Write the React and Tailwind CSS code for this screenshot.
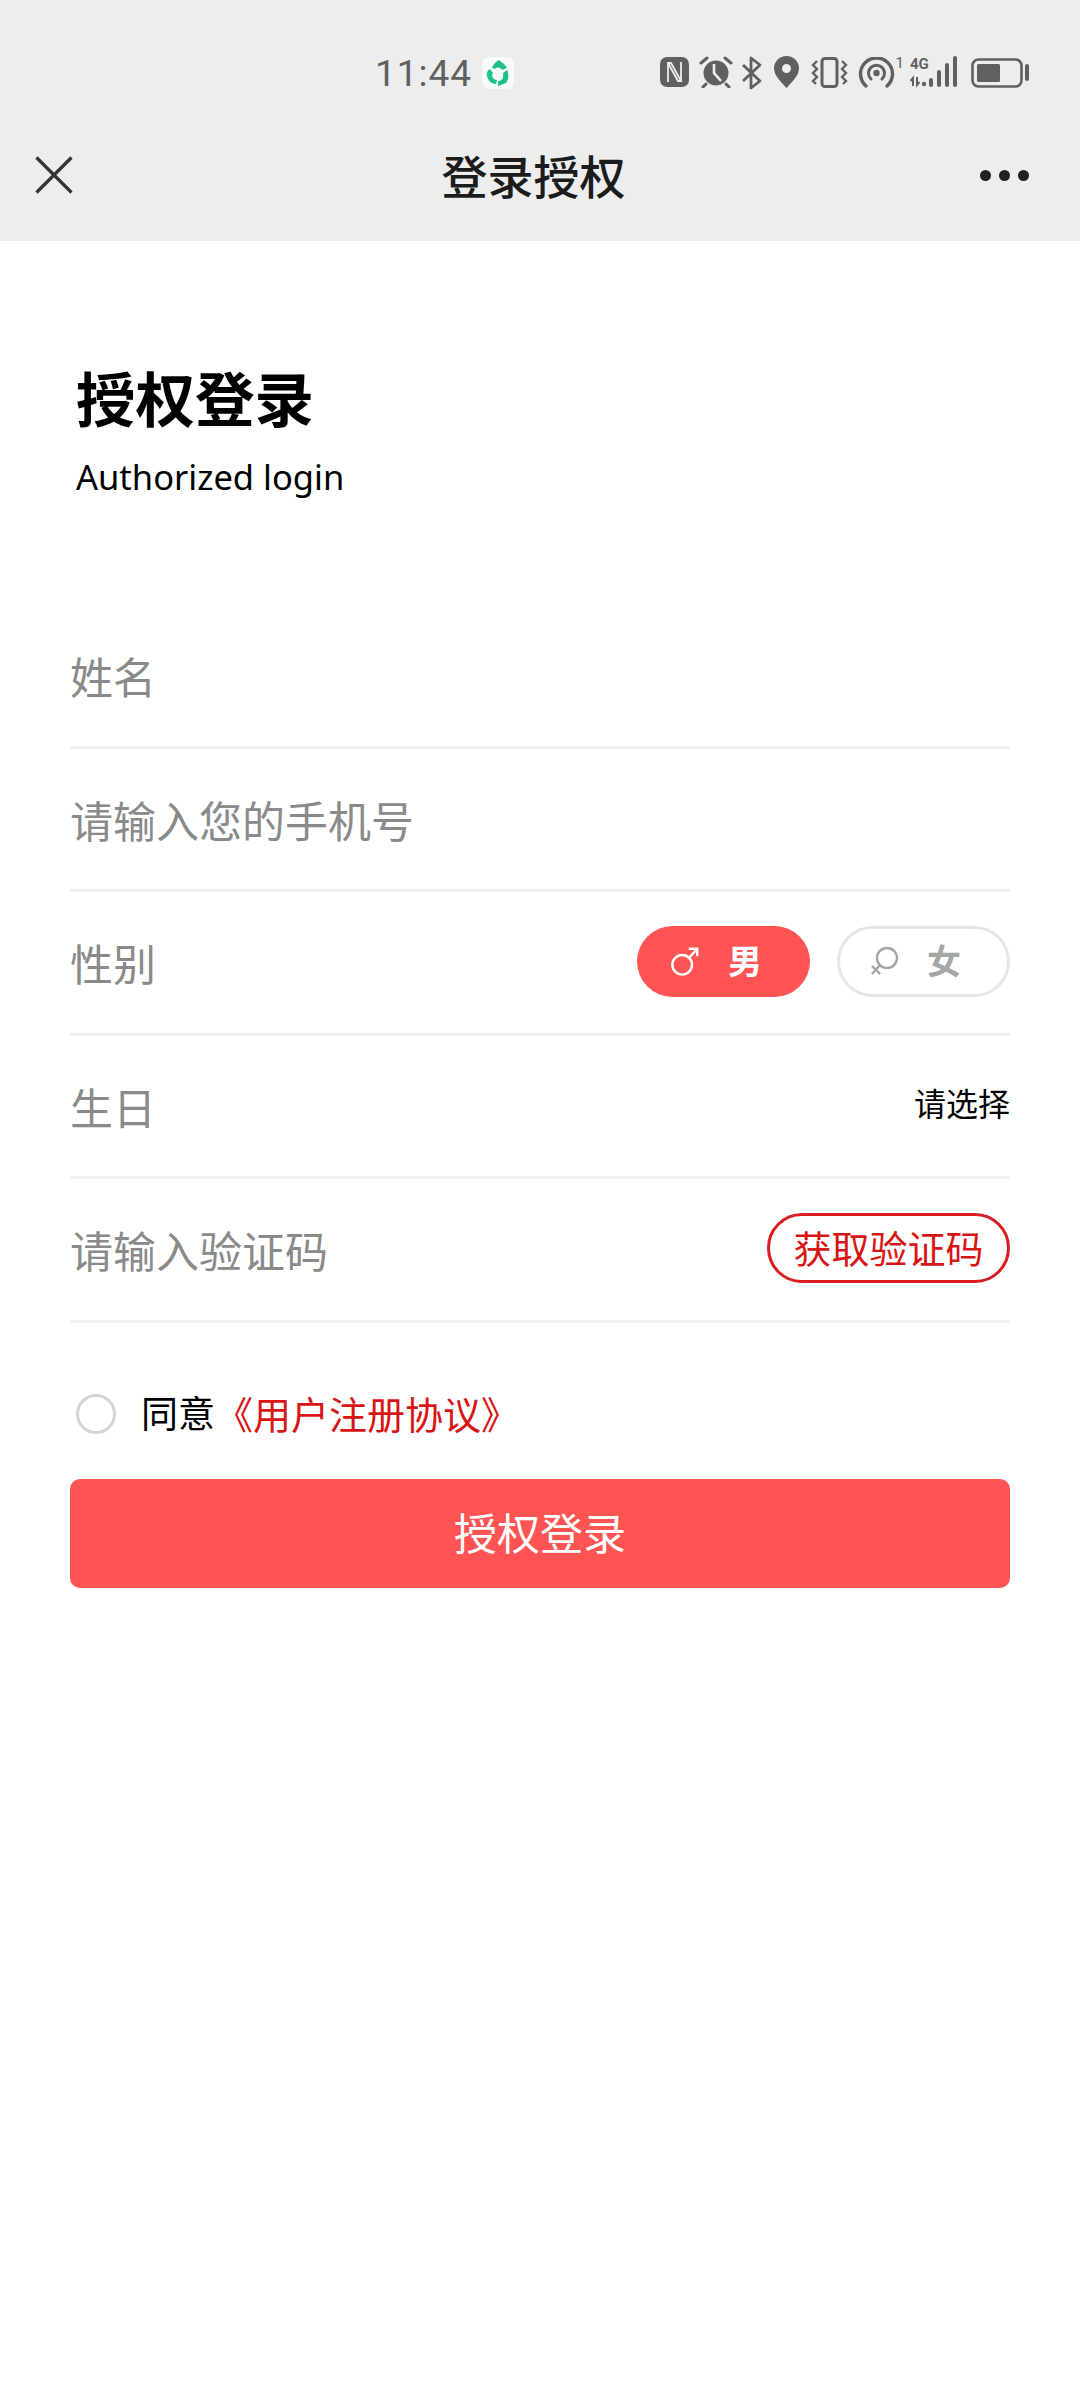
const CJK = "font-['Noto_Sans_CJK_SC','Noto_Sans',sans-serif]";

function StatusIcons() {
  return (
    <div className="flex items-start text-[#606060]">
      {/* NFC */}
      <svg width="29" height="30" viewBox="0 0 29 30" className="mt-[1px]">
        <rect width="29" height="30" rx="7" fill="#606060" />
        <path d="M8 25 V6 H11 L21 24 H18 L8 6 M21 5 V24" stroke="#ededed" strokeWidth="1.8" fill="none" />
      </svg>
      {/* Alarm */}
      <svg width="34" height="32" viewBox="0 0 34 32" className="ml-[10px]">
        <circle cx="17" cy="17" r="12.5" fill="#606060" />
        <path d="M15 8 V17 L22 25" stroke="#ededed" strokeWidth="2.6" fill="none" />
        <path d="M2 7 L8 2 M32 7 L26 2 M7 28 L4 31 M27 28 L30 31" stroke="#606060" strokeWidth="3" strokeLinecap="round" />
      </svg>
      {/* Bluetooth */}
      <svg width="21" height="34" viewBox="0 0 21 34" className="ml-[8px]">
        <path d="M2 9 L19 25 L10 32 V2 L19 9 L2 25" stroke="#606060" strokeWidth="2.8" fill="none" strokeLinejoin="round" />
      </svg>
      {/* Location */}
      <svg width="25" height="32" viewBox="0 0 25 32" className="ml-[12px]">
        <path fillRule="evenodd" d="M12.5 0 C5.5 0 0 5.5 0 12.3 C0 20 8 27 12.5 32 C17 27 25 20 25 12.3 C25 5.5 19.5 0 12.5 0 Z M12.5 8 A4.5 4.5 0 1 1 12.5 17 A4.5 4.5 0 1 1 12.5 8 Z" fill="#606060" />
      </svg>
      {/* Vibrate */}
      <svg width="37" height="31" viewBox="0 0 37 31" className="ml-[12px] mt-[1px]">
        <rect x="11" y="1.5" width="15" height="28" rx="3" stroke="#606060" strokeWidth="3" fill="none" />
        <path d="M6 4 L2 8 L6 12 L2 16 L6 20 L2 24 L5 27 M31 4 L35 8 L31 12 L35 16 L31 20 L35 24 L32 27" stroke="#606060" strokeWidth="2.4" fill="none" />
      </svg>
      {/* Hotspot */}
      <svg width="37" height="31" viewBox="0 0 37 31" className="ml-[10px] mt-[1px]">
        <path d="M8 29 A16 16 0 1 1 29 29" stroke="#606060" strokeWidth="3.4" fill="none" strokeLinecap="round" />
        <path d="M13 22 A8 8 0 1 1 24 22" stroke="#606060" strokeWidth="3" fill="none" strokeLinecap="round" />
        <circle cx="18.5" cy="16" r="3.2" fill="#606060" />
      </svg>
      <span className="ml-[1px] text-[15px] leading-[14px] font-['Roboto',sans-serif]">1</span>
      {/* 4G + signal */}
      <div className="relative ml-[6px] h-[32px] w-[48px]">
        <span className="absolute left-0 top-0 text-[15px] leading-[16px] font-bold font-['Roboto',sans-serif]">4G</span>
        <svg width="48" height="32" viewBox="0 0 48 32" className="absolute inset-0">
          <path d="M3 30 V22 L0.5 25 M7 21 V29 L9.5 26" stroke="#606060" strokeWidth="2" fill="none" />
          <circle cx="14" cy="28" r="2.2" fill="#606060" />
          <rect x="19" y="22" width="4" height="9" rx="2" fill="#606060" />
          <rect x="27" y="14" width="4" height="17" rx="2" fill="#606060" />
          <rect x="35" y="7" width="4" height="24" rx="2" fill="#606060" />
          <rect x="43" y="0" width="4" height="31" rx="2" fill="#606060" />
        </svg>
      </div>
      {/* Battery */}
      <svg width="58" height="30" viewBox="0 0 58 30" className="ml-[13px] mt-[2px]">
        <rect x="1.5" y="1.5" width="49" height="27" rx="6" stroke="#606060" strokeWidth="2.6" fill="none" />
        <rect x="6" y="6" width="23" height="18" rx="1.5" fill="#606060" />
        <rect x="54" y="6" width="4" height="17" rx="2" fill="#606060" />
      </svg>
    </div>
  );
}

function Row({ label, right }) {
  return (
    <div className="flex h-[143.5px] items-center justify-between border-b-[3px] border-[#efefef] pt-[3px]">
      <span className="pb-[2px] text-[43px] leading-none text-[#8a8a8a]">{label}</span>
      {right}
    </div>
  );
}

export default function App() {
  return (
    <div className={`min-h-[2387px] w-[1080px] bg-white ${CJK}`}>
      <header className="h-[241px] bg-[#ededed]">
        <div className="flex h-[150px] items-start pl-[375px] pr-[51px] pt-[56px]">
          <span className="text-[37px] leading-[36px] tracking-[1px] text-[#606060] font-['Roboto',sans-serif]">11:44</span>
          <div className="ml-[10px] mt-[1px] flex h-[32px] w-[32px] items-center justify-center rounded-[7px] bg-[#f8faf8]">
            <svg width="24" height="28" viewBox="0 0 24 28" fill="none">
              <path d="M6 9 C8 4 11 2 13 1 C15 3 19 5 21 9 L16 11 C14 8 11 8 9 10 Z" fill="#1fc08a" />
              <path d="M21 11 C23 15 23 20 20 24 L12 27 L12 22 C16 22 18 19 17 14 Z" fill="#1fc08a" />
              <path d="M10 25 C6 25 2 22 1 17 C0 14 2 11 4 10 L7 14 C5 17 7 21 11 21 Z" fill="#1fc08a" />
            </svg>
          </div>
          <div className="ml-auto"><StatusIcons /></div>
        </div>
        <nav className="flex h-[50px] items-center pl-[35px] pr-[51px]">
          <svg width="38" height="38" viewBox="0 0 38 38">
            <path d="M1.5 1.5 L36.5 36.5 M36.5 1.5 L1.5 36.5" stroke="#333" strokeWidth="3.2" />
          </svg>
          <h1 className="flex-1 pb-[3px] pl-[14px] text-center text-[46px] font-medium leading-none text-[#1c1c1c]">登录授权</h1>
          <div className="flex gap-[8px]">
            <span className="h-[11px] w-[11px] rounded-full bg-[#222]" />
            <span className="h-[11px] w-[11px] rounded-full bg-[#222]" />
            <span className="h-[11px] w-[11px] rounded-full bg-[#222]" />
          </div>
        </nav>
      </header>

      <main className="px-[70px]">
        <h2 className="pl-[6px] pt-[120px] text-[59.5px] font-bold leading-[70px] text-black">授权登录</h2>
        <p className="pl-[6px] pt-[24px] text-[34.5px] leading-[44px] text-black font-['Noto_Sans',sans-serif]">Authorized login</p>

        <section className="mt-[106px] flex flex-col">
          <Row label="姓名" />
          <Row label="请输入您的手机号" />
          <Row
            label="性别"
            right={
              <div className="mb-[5px] flex gap-[27px]">
                <div className="flex h-[71px] w-[173px] items-center rounded-full bg-[#ff5454] pl-[33px] text-white">
                  <svg width="30" height="30" viewBox="0 0 30 32" fill="none" stroke="currentColor" strokeWidth="2.6">
                    <circle cx="12" cy="20" r="10.5" />
                    <path d="M20 12 L28 3 M19 3 H28 V11" />
                  </svg>
                  <span className="ml-[28px] mb-[3px] text-[34px] font-bold leading-none">男</span>
                </div>
                <div className="flex h-[71px] w-[173px] items-center rounded-full border-[3px] border-[#e6e6e6] bg-white pl-[30px] text-[#a6a6a6]">
                  <svg width="30" height="30" viewBox="0 0 30 30" fill="none" stroke="currentColor" strokeWidth="2.4">
                    <circle cx="17" cy="12" r="10" />
                    <path d="M10 19 L2 28 M2 20 L10 28" />
                  </svg>
                  <span className="ml-[27px] mb-[3px] text-[34px] font-bold leading-none">女</span>
                </div>
              </div>
            }
          />
          <Row label="生日" right={<span className="pb-[11px] text-[32px] leading-none text-black">请选择</span>} />
          <Row
            label="请输入验证码"
            right={
              <button className="mb-[5px] flex h-[70px] w-[243px] items-center justify-center rounded-full border-[3px] border-[#d81e1e] pb-[2px] text-[38px] leading-none text-[#d81414]">
                获取验证码
              </button>
            }
          />
        </section>

        <div className="mt-[69px] flex h-[44px] items-center pl-[6px]">
          <span className="h-[40px] w-[40px] rounded-full border-[3px] border-[#d5d5d5]" />
          <span className="ml-[25px] pb-[2px] text-[37px] leading-none text-black">同意</span>
          <span className="pb-[2px] text-[38px] leading-none text-[#d81414]">《用户注册协议》</span>
        </div>

        <button className="mt-[43px] flex h-[109px] w-full items-center justify-center rounded-[10px] bg-[#ff5454] pb-[3px] text-[43px] leading-none text-white">
          授权登录
        </button>
      </main>
    </div>
  );
}
